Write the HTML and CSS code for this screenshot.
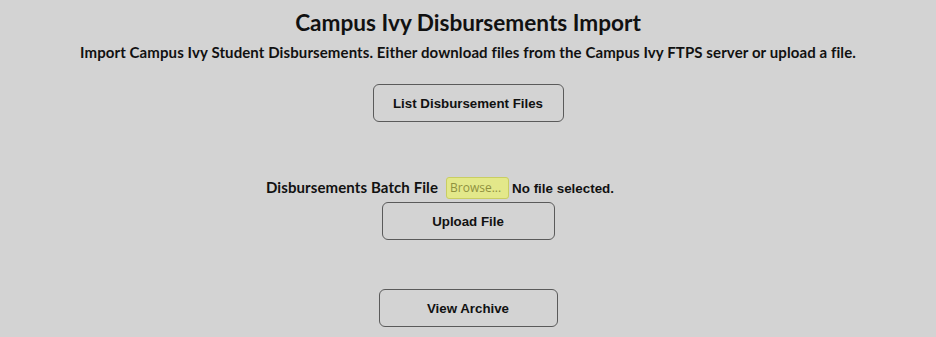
FILE: index.html
```html
<!DOCTYPE html>
<html>
<head>
  <title>Campus Ivy Disbursements Import</title>
  <link rel="stylesheet" href="styles.css">
</head>
<body>
  <div class="container">
    <h1>Campus Ivy Disbursements Import</h1>
    <p class="intro">Import Campus Ivy Student Disbursements. Either download files from the Campus Ivy FTPS server or upload a file.</p>

    <div class="section list-section">
      <button type="button" class="action-button list-button">List Disbursement Files</button>
    </div>

    <form id="upload-form" class="section upload-section">
      <div class="file-row">
        <label for="batch-file">Disbursements Batch File</label>
        <span class="browse">Browse...</span>
        <span class="file-name">No file selected.</span>
      </div>
      <button type="submit" class="action-button upload-button">Upload File</button>
    </form>

    <div class="section archive-section">
      <button type="button" class="action-button archive-button">View Archive</button>
    </div>
  </div>
</body>
</html>
```

FILE: styles.css
```css
body {
  margin: 0;
  background-color: #d3d3d3;
  font-family: "Lato", "Open Sans", sans-serif;
  color: #111;
}

.container {
  display: flex;
  flex-direction: column;
  align-items: center;
  padding-top: 10px;
}

h1 {
  margin: 0;
  font-size: 22.6px;
  font-weight: bold;
  line-height: 26px;
}

.intro {
  margin: 7px 0 0;
  font-size: 15px;
  font-weight: bold;
  line-height: 18px;
  letter-spacing: 0.1px;
}

.section {
  display: flex;
  flex-direction: column;
  align-items: center;
}

.list-section {
  margin-top: 23px;
}

.upload-section {
  margin-top: 55px;
}

.archive-section {
  margin-top: 49px;
}

.action-button {
  height: 38px;
  padding: 0;
  font-family: "Liberation Sans", Arial, sans-serif;
  font-size: 13.3px;
  font-weight: bold;
  color: #111;
  background-color: #d3d3d3;
  border: 1px solid #5a5a5a;
  border-radius: 6px;
}

.list-button {
  width: 191px;
}

.upload-button {
  width: 173px;
  margin-top: 3px;
}

.archive-button {
  width: 179px;
}

.file-row {
  display: flex;
  align-items: center;
}

.file-row label {
  font-size: 15px;
  font-weight: bold;
  letter-spacing: 0.1px;
  margin-right: 8px;
  margin-top: -3px;
}

.browse {
  display: inline-block;
  width: 55px;
  padding: 2px 3px;
  font-family: "Open Sans", sans-serif;
  font-size: 12px;
  line-height: 16px;
  color: #8f913f;
  background-color: #e3e88a;
  border: 1px solid #c9ce62;
  border-radius: 3px;
}

.file-name {
  width: 158px;
  margin-left: 3px;
  font-family: "Liberation Sans", Arial, sans-serif;
  font-size: 13.4px;
  font-weight: bold;
}
```
